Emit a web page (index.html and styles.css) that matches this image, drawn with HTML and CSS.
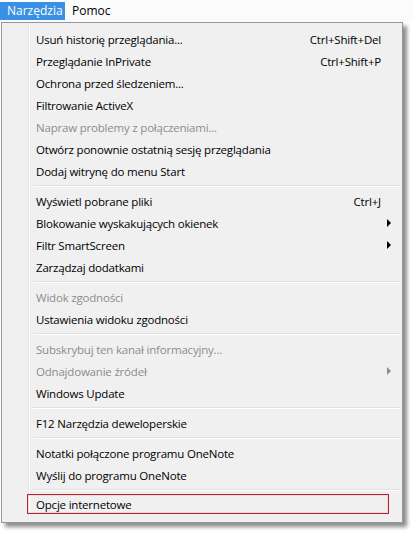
FILE: index.html
```html
<!DOCTYPE html>
<html lang="pl">
<head>
<meta charset="utf-8">
<title>Narzędzia</title>
<link rel="stylesheet" href="styles.css">
</head>
<body>
<div class="menubar">
  <span class="top active">Narzędzia</span>
  <span class="top">Pomoc</span>
</div>
<div class="menu">
  <div class="item"><span>Usuń historię przeglądania...</span><span class="key">Ctrl+Shift+Del</span></div>
  <div class="item"><span>Przeglądanie InPrivate</span><span class="key">Ctrl+Shift+P</span></div>
  <div class="item"><span>Ochrona przed śledzeniem...</span></div>
  <div class="item"><span>Filtrowanie ActiveX</span></div>
  <div class="item disabled"><span>Napraw problemy z połączeniami...</span></div>
  <div class="item"><span>Otwórz ponownie ostatnią sesję przeglądania</span></div>
  <div class="item"><span>Dodaj witrynę do menu Start</span></div>
  <div class="sep"></div>
  <div class="item"><span>Wyświetl pobrane pliki</span><span class="key">Ctrl+J</span></div>
  <div class="item sub"><span>Blokowanie wyskakujących okienek</span></div>
  <div class="item sub"><span>Filtr SmartScreen</span></div>
  <div class="item"><span>Zarządzaj dodatkami</span></div>
  <div class="sep"></div>
  <div class="item disabled"><span>Widok zgodności</span></div>
  <div class="item"><span>Ustawienia widoku zgodności</span></div>
  <div class="sep"></div>
  <div class="item disabled"><span>Subskrybuj ten kanał informacyjny...</span></div>
  <div class="item disabled sub"><span>Odnajdowanie źródeł</span></div>
  <div class="item"><span>Windows Update</span></div>
  <div class="sep"></div>
  <div class="item"><span>F12 Narzędzia deweloperskie</span></div>
  <div class="sep"></div>
  <div class="item"><span>Notatki połączone programu OneNote</span></div>
  <div class="item"><span>Wyślij do programu OneNote</span></div>
  <div class="sep"></div>
  <div class="item focus"><span>Opcje internetowe</span></div>
</div>
</body>
</html>
```
FILE: styles.css
```css
html, body {
  margin: 0;
  padding: 0;
  background: #ffffff;
}
body {
  font-family: "Open Sans", "Noto Sans", sans-serif;
  font-size: 11.5px;
  letter-spacing: -0.2px;
  color: #000;
  width: 413px;
  height: 538px;
  overflow: hidden;
}
.menubar {
  height: 22px;
  display: flex;
  align-items: stretch;
  background: #fbfbfb;
  padding-top: 2px;
  box-sizing: border-box;
  font-size: 12px;
  letter-spacing: 0;
}
.top {
  display: flex;
  align-items: center;
  padding: 0 7px;
  line-height: 18px;
  height: 18px;
}
.top.active {
  background: #3a90e4;
  color: #fff;
  width: 51px;
}
.menu {
  width: 396px;
  margin-left: 1px;
  border: 1px solid #979797;
  background-color: #f0f0f0;
  background-image: linear-gradient(to right, transparent 26px, #e2e3e3 26px, #e2e3e3 27px, #ffffff 27px, #ffffff 28px, transparent 28px);
  padding: 5px 2px 6px 2px;
  box-shadow: 4px 4px 4px rgba(0, 0, 0, 0.45);
}
.item {
  position: relative;
  display: flex;
  justify-content: space-between;
  align-items: center;
  height: 22px;
  padding: 0 19px 0 32px;
  box-sizing: border-box;
  white-space: nowrap;
}
.item.disabled {
  color: #8d8d8d;
}
.sub::after {
  content: "";
  position: absolute;
  right: 9px;
  top: 7px;
  border-left: 4px solid #000;
  border-top: 4px solid transparent;
  border-bottom: 4px solid transparent;
}
.disabled.sub::after {
  border-left-color: #8d8d8d;
}
.sep {
  height: 8px;
  margin-left: 29px;
  background: linear-gradient(to bottom, transparent 3px, #e0e0e0 3px, #e0e0e0 4px, #ffffff 4px, #ffffff 5px, transparent 5px);
}
.focus {
  margin-left: 23px;
  margin-right: 11px;
  padding-left: 8px;
  height: 20px;
  margin-top: 0;
  margin-bottom: 2px;
  border: 1px solid #b3262d;
  box-shadow: inset 0 0 0 1px #f7d4d6;
}
```
